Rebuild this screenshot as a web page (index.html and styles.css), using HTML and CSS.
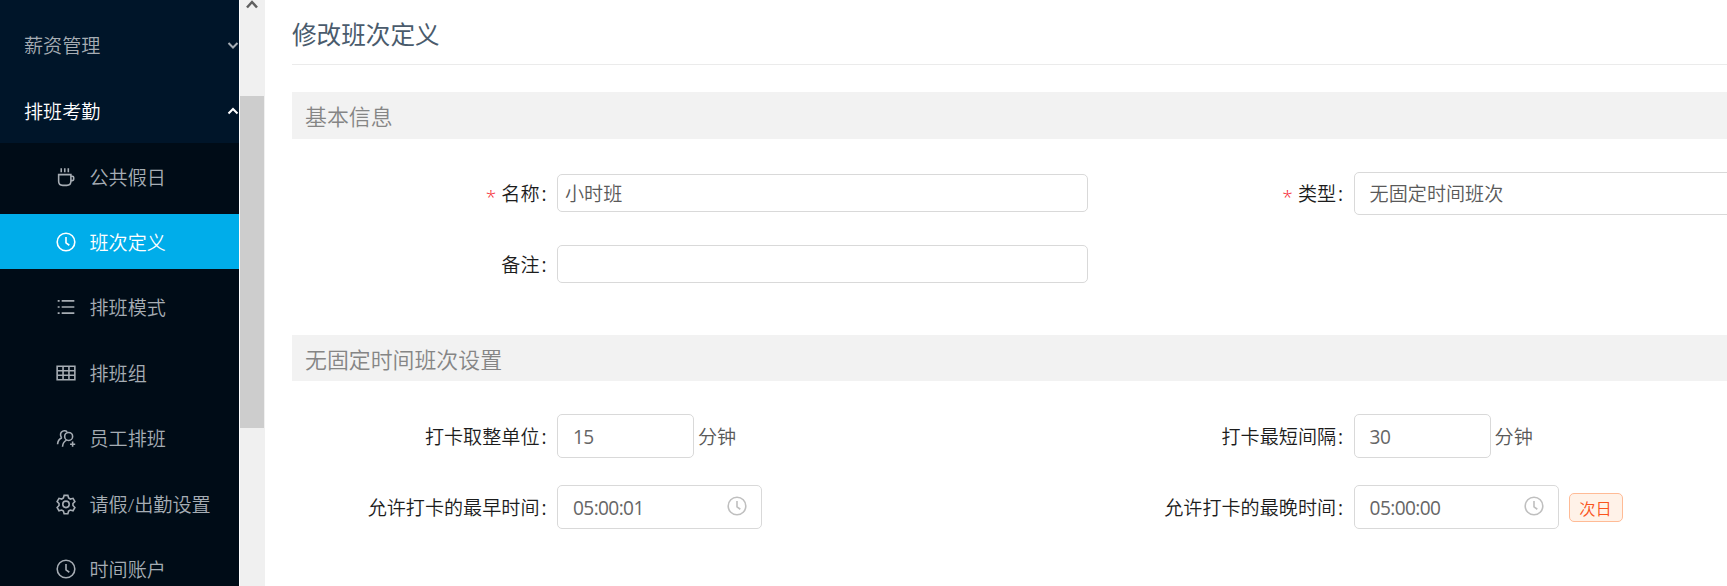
FILE: index.html
```html
<!DOCTYPE html>
<html lang="zh-CN">
<head>
    <meta charset="UTF-8">
    <meta name="viewport" content="width=device-width, initial-scale=1.0">
    <title>修改班次定义</title>
    <link rel="stylesheet" href="styles.css">
</head>
<body>
    <svg class="sprite">
        <symbol id="icon-clock" viewBox="0 0 1024 1024">
            <circle cx="512" cy="512" r="410"/>
            <path d="M512 280v270l154 113"/>
        </symbol>
    </svg>

    <aside class="sidebar">
        <div class="menu-title">
            <span>薪资管理</span>
            <svg class="arrow" viewBox="0 0 12 8"><path d="M1.5 1L6 5.500 10.500 1"/></svg>
        </div>
        <div class="menu-title open">
            <span>排班考勤</span>
            <svg class="arrow" viewBox="0 0 12 8"><path d="M1.500 6.500L6 2l4.500 4.500"/></svg>
        </div>
        <ul class="submenu">
            <li>
                <svg class="icon" viewBox="0 0 1024 1024"><path d="M170 400h570v310q0 190-190 190H360q-190 0-190-190zM740 480h70q60 0 60 60v80q0 60-60 60h-70M290 110v180M455 110v180M620 110v180"/></svg>
                <span>公共假日</span>
            </li>
            <li class="active">
                <svg class="icon"><use href="#icon-clock"/></svg>
                <span>班次定义</span>
            </li>
            <li>
                <svg class="icon" viewBox="0 0 1024 1024"><path d="M310 228h590M310 512h590M310 796h590M125 228h90M125 512h90M125 796h90"/></svg>
                <span>排班模式</span>
            </li>
            <li>
                <svg class="icon" viewBox="0 0 1024 1024"><path d="M100 200h824v624H100zM100 408h824M100 616h824M375 200v624M649 200v624"/></svg>
                <span>排班组</span>
            </li>
            <li>
                <svg class="icon" viewBox="0 0 1024 1024"><path d="M320 500a185 185 0 1 1 250-280M320 500Q130 590 120 800M350 920q10-220 190-310M700 800h240M820 680v240"/><circle cx="635" cy="440" r="185"/></svg>
                <span>员工排班</span>
            </li>
            <li>
                <svg class="icon" viewBox="0 0 1024 1024"><path d="M425 110h174l35 125 80 46 125-32 87 150-90 92v92l90 92-87 150-125-32-80 46-35 125H425l-35-125-80-46-125 32-87-150 90-92v-92l-90-92 87-150 125 32 80-46z"/><circle cx="512" cy="529" r="150"/></svg>
                <span>请假/出勤设置</span>
            </li>
            <li>
                <svg class="icon"><use href="#icon-clock"/></svg>
                <span>时间账户</span>
            </li>
        </ul>
    </aside>

    <div class="scrollbar">
        <svg class="scroll-up" viewBox="0 0 12 10"><path d="M1 7.500L6 2l5 5.500"/></svg>
        <div class="scroll-thumb"></div>
    </div>

    <main class="content">
        <h1>修改班次定义</h1>

        <section class="basic">
            <h2>基本信息</h2>
            <div class="row">
                <div class="field">
                    <label class="required">名称</label>
                    <div class="input text-input">小时班</div>
                </div>
                <div class="field">
                    <label class="required">类型</label>
                    <div class="input select">无固定时间班次</div>
                </div>
            </div>
            <div class="row">
                <div class="field">
                    <label>备注</label>
                    <div class="input text-input"></div>
                </div>
            </div>
        </section>

        <section class="settings">
            <h2>无固定时间班次设置</h2>
            <div class="row">
                <div class="field">
                    <label>打卡取整单位</label>
                    <div class="input number">15</div>
                    <span class="unit">分钟</span>
                </div>
                <div class="field">
                    <label>打卡最短间隔</label>
                    <div class="input number">30</div>
                    <span class="unit">分钟</span>
                </div>
            </div>
            <div class="row">
                <div class="field">
                    <label>允许打卡的最早时间</label>
                    <div class="input time"><span>05:00:01</span><svg class="icon"><use href="#icon-clock"/></svg></div>
                </div>
                <div class="field">
                    <label>允许打卡的最晚时间</label>
                    <div class="input time"><span>05:00:00</span><svg class="icon"><use href="#icon-clock"/></svg></div>
                    <span class="tag">次日</span>
                </div>
            </div>
        </section>
    </main>
</body>
</html>
```
FILE: styles.css
```css
* {
    box-sizing: border-box;
}

body {
    margin: 0;
    height: 586px;
    display: flex;
    overflow: hidden;
    background: #fff;
    color: #595959;
    font-family: "Open Sans", "Noto Sans CJK SC", sans-serif;
    font-size: 19.1px;
    font-weight: 350;
    line-height: 28px;
}

.sprite {
    display: none;
}

.icon {
    width: 22px;
    height: 22px;
    flex: none;
    fill: none;
    stroke: currentColor;
    stroke-width: 74;
}

/* sidebar */
.sidebar {
    width: 239px;
    height: 586px;
    flex: none;
    overflow: hidden;
    padding-top: 13px;
    background: #001529;
    color: #a6adb4;
}

.menu-title {
    display: flex;
    align-items: center;
    justify-content: space-between;
    height: 65px;
    padding-left: 24px;
}

.menu-title span {
    padding-top: 1px;
}

.menu-title.open {
    color: #fff;
}

.menu-title.open span {
    padding-top: 3px;
}

.arrow {
    width: 12px;
    height: 8px;
    fill: none;
    stroke: currentColor;
    stroke-width: 2;
}

.submenu {
    list-style: none;
    height: 460px;
    margin: 0;
    padding: 5.6px 0 0;
    background: #000c17;
}

.submenu li {
    display: flex;
    align-items: center;
    gap: 12.5px;
    height: 55px;
    margin-bottom: 10.4px;
    padding-left: 55px;
}

.submenu .icon {
    margin-top: 1px;
}

.submenu span {
    padding-top: 3px;
}

.submenu .active {
    background: #00adea;
    color: #fff;
}

/* scrollbar */
.scrollbar {
    width: 25px;
    flex: none;
    margin-left: 1px;
    background: #f0f0f0;
}

.scroll-up {
    display: block;
    width: 12px;
    height: 10px;
    margin: 0 0 86px 6px;
    fill: none;
    stroke: #606060;
    stroke-width: 2.5;
}

.scroll-thumb {
    width: 24px;
    height: 332px;
    background: #cdcdcd;
}

/* form */
.content {
    flex: 1;
    min-width: 0;
    overflow: hidden;
    padding-left: 27px;
}

h1 {
    height: 65px;
    margin: 0 0 27px;
    border-bottom: 1px solid #ebebeb;
    color: #4a5b6c;
    font-size: 24.6px;
    font-weight: 400;
    line-height: 70px;
}

h2 {
    height: 47px;
    margin: 0;
    padding-left: 13px;
    background: #f2f2f2;
    color: #858585;
    font-size: 21.9px;
    font-weight: 350;
    line-height: 50px;
}

.row {
    display: grid;
    grid-template-columns: 796.6px 796.6px;
    height: 44px;
    margin-bottom: 27px;
}

.field {
    display: flex;
    align-items: center;
}

.basic {
    height: 243px;
}

.basic h2 {
    margin-bottom: 32px;
}

.settings h2 {
    height: 46px;
    margin-bottom: 33px;
}

label {
    width: 265px;
    flex: none;
    padding: 2px 10.5px 0 0;
    color: #1c1c1c;
    text-align: right;
}

label::after {
    content: ":";
    margin-left: 2px;
    font-weight: 400;
}

/* asterisk glyph sits high in the line, so it is lowered to the label's middle */
.required::before {
    content: "*";
    margin-right: 5px;
    color: #f5222d;
    vertical-align: -3px;
    line-height: 1;
}

.input {
    display: flex;
    align-items: center;
    height: 44px;
    padding: 2px 15px 0;
    border: 1px solid #d9d9d9;
    border-radius: 5px;
}

.text-input {
    width: 531px;
    height: 38px;
    padding: 2px 7px 0;
}

.select {
    width: 531px;
    height: 43px;
}

.number {
    width: 137px;
    color: #666;
    font-weight: 400;
    letter-spacing: -0.6px;
}

.time {
    width: 205px;
    justify-content: space-between;
    padding-right: 13px;
    color: #666;
    font-weight: 400;
    letter-spacing: -0.6px;
}

.time .icon {
    margin-bottom: 5px;
    color: #bfbfbf;
}

.unit {
    margin-left: 4px;
    padding-top: 2px;
}

.tag {
    width: 54px;
    height: 29px;
    margin-left: 10px;
    border: 1px solid #ffbb96;
    border-radius: 5px;
    background: #fff2e8;
    color: #fa541c;
    font-size: 16.3px;
    line-height: 30px;
    text-align: center;
}
```
